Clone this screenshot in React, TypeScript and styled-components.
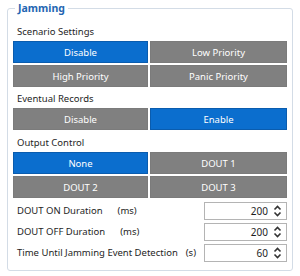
import React, { useState } from "react";
import styled, { createGlobalStyle } from "styled-components";

const GlobalStyle = createGlobalStyle`
  html, body {
    margin: 0;
    padding: 0;
    background: #ffffff;
  }
  body {
    font-family: "Noto Sans", "Open Sans", sans-serif;
    color: #1e1e1e;
  }
`;

const Group = styled.fieldset`
  margin: 1px 7px 0 7px;
  width: 286px;
  box-sizing: border-box;
  border: 1px solid #d3dce6;
  border-radius: 3px;
  padding: 8px 5px 7px 5px;
`;

const Title = styled.legend`
  margin-left: 2px;
  padding: 0 3px 0 3px;
  font-size: 10.5px;
  line-height: 14px;
  font-weight: 700;
  color: #2466b2;
`;

const SectionLabel = styled.div<{ $top: number }>`
  margin-top: ${(p) => p.$top}px;
  height: 18px;
  line-height: 18px;
  padding-left: 4px;
  font-size: 9.5px;
`;

const ButtonGrid = styled.div`
  display: grid;
  grid-template-columns: 135px 1fr;
  gap: 2px;
`;

const ToggleButton = styled.button<{ $active: boolean }>`
  height: 22px;
  padding: 0;
  margin: 0;
  border: 1px solid ${(p) => (p.$active ? "#0a5cae" : "#7b7b7b")};
  background: ${(p) => (p.$active ? "#0b6ece" : "#808080")};
  color: #ffffff;
  font-family: inherit;
  font-size: 9.5px;
  cursor: pointer;
`;

const NumberList = styled.div`
  margin-top: 2px;
`;

const NumberRow = styled.div`
  display: flex;
  align-items: center;
  height: 21px;
  padding-left: 4px;
  font-size: 9.5px;
`;

const RowLabel = styled.span`
  white-space: nowrap;
`;

const Unit = styled.span<{ $gap: number }>`
  margin-left: ${(p) => p.$gap}px;
  white-space: nowrap;
`;

const Spin = styled.div`
  margin-left: auto;
  width: 83px;
  height: 18px;
  box-sizing: border-box;
  border: 1px solid #b4b4b4;
  display: flex;
  align-items: center;
  justify-content: flex-end;
  padding-right: 4px;
  font-size: 10px;
`;

const SpinValue = styled.span`
  margin-right: 5px;
`;

const Arrows = () => (
  <svg width="9" height="12" viewBox="0 0 9 12" fill="none" stroke="#333" strokeWidth="1.6">
    <path d="M1.5 4.5 L4.5 1.5 L7.5 4.5" />
    <path d="M1.5 7.5 L4.5 10.5 L7.5 7.5" />
  </svg>
);

const Options: React.FC<{ items: string[]; value: number; onPick: (i: number) => void }> = ({
  items,
  value,
  onPick,
}) => (
  <ButtonGrid>
    {items.map((it, i) => (
      <ToggleButton key={it} $active={i === value} onClick={() => onPick(i)}>
        {it}
      </ToggleButton>
    ))}
  </ButtonGrid>
);

const durations = [
  { label: "DOUT ON Duration", unit: "(ms)", gap: 15, value: "200" },
  { label: "DOUT OFF Duration", unit: "(ms)", gap: 15, value: "200" },
  { label: "Time Until Jamming Event Detection", unit: "(s)", gap: 8, value: "60" },
];

export default function App() {
  const [scenario, setScenario] = useState(0);
  const [records, setRecords] = useState(1);
  const [output, setOutput] = useState(0);

  return (
    <>
      <GlobalStyle />
      <Group>
        <Title>Jamming</Title>
        <SectionLabel $top={0}>Scenario Settings</SectionLabel>
        <Options
          items={["Disable", "Low Priority", "High Priority", "Panic Priority"]}
          value={scenario}
          onPick={setScenario}
        />
        <SectionLabel $top={3}>Eventual Records</SectionLabel>
        <Options items={["Disable", "Enable"]} value={records} onPick={setRecords} />
        <SectionLabel $top={4}>Output Control</SectionLabel>
        <Options items={["None", "DOUT 1", "DOUT 2", "DOUT 3"]} value={output} onPick={setOutput} />
        <NumberList>
          {durations.map((d) => (
            <NumberRow key={d.label}>
              <RowLabel>{d.label}</RowLabel>
              <Unit $gap={d.gap}>{d.unit}</Unit>
              <Spin>
                <SpinValue>{d.value}</SpinValue>
                <Arrows />
              </Spin>
            </NumberRow>
          ))}
        </NumberList>
      </Group>
    </>
  );
}
